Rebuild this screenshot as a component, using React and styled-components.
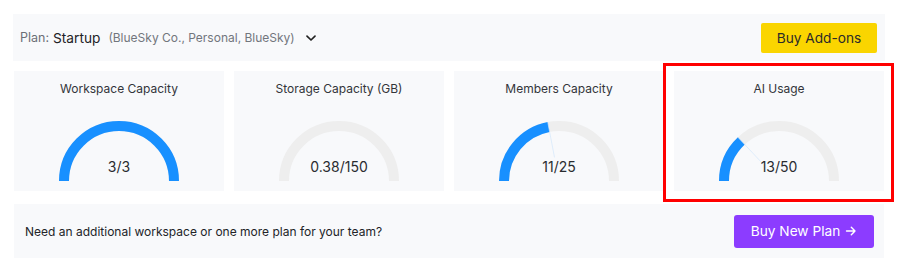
import React from "react";
import styled, { createGlobalStyle } from "styled-components";

const Global = createGlobalStyle`
  html, body { margin: 0; padding: 0; background: #ffffff; }
  body { font-family: Inter, "Noto Sans", Arial, sans-serif; -webkit-font-smoothing: antialiased; }
`;

const Page = styled.div`
  width: 870px;
  padding: 14px 0 0 14px;
  display: flex;
  flex-direction: column;
`;

const TopBar = styled.div`
  height: 47px;
  background: #f8f9fb;
  display: flex;
  align-items: center;
  justify-content: space-between;
  padding: 0 8px 0 7px;
  margin-left: -1px;
  margin-right: -1px;
`;

const PlanInfo = styled.div`
  display: flex;
  align-items: center;
  white-space: nowrap;
`;

const PlanLabel = styled.span`
  font-size: 12.5px;
  color: #6b6f76;
`;

const PlanName = styled.span`
  font-size: 13.7px;
  color: #1f2226;
  margin-left: 4px;
`;

const PlanOrgs = styled.span`
  font-size: 12px;
  color: #72767d;
  margin-left: 8px;
`;

const Chevron = styled.svg`
  margin-left: 10px;
  width: 12px;
  height: 12px;
`;

const AddonsButton = styled.button`
  width: 116px;
  height: 30px;
  border: none;
  border-radius: 2px;
  background: #fad500;
  color: #2a2a2a;
  font-family: inherit;
  font-size: 13.7px;
  padding: 0;
`;

const Cards = styled.div`
  margin-top: 10px;
  display: grid;
  grid-template-columns: repeat(4, 210px);
  column-gap: 10px;
`;

const Card = styled.div`
  position: relative;
  height: 120px;
  background: #f8f9fb;
  display: flex;
  flex-direction: column;
  align-items: center;
  box-sizing: border-box;
  padding: 9px 0 10px;
`;

const CardTitle = styled.div`
  font-size: 12px;
  line-height: 17px;
  color: #33353a;
`;

const GaugeWrap = styled.div`
  margin-top: auto;
  display: grid;
  width: 120px;
  height: 60px;
  & > * { grid-area: 1 / 1; }
`;

const GaugeValue = styled.div`
  align-self: end;
  justify-self: center;
  margin-bottom: 6px;
  font-size: 14px;
  line-height: 16px;
  color: #2a2c30;
`;

const Highlight = styled.div`
  position: absolute;
  left: -11px;
  top: -8px;
  right: -10px;
  bottom: -11px;
  border: 3px solid #f00;
  pointer-events: none;
`;

const BottomBar = styled.div`
  margin-top: 13px;
  height: 54px;
  background: #f8f9fb;
  display: flex;
  align-items: center;
  justify-content: space-between;
  padding: 0 10px 0 11px;
`;

const BottomText = styled.span`
  font-size: 12px;
  color: #222428;
`;

const PlanButton = styled.button`
  width: 140px;
  height: 33px;
  border: none;
  border-radius: 3px;
  background: #8c3cff;
  color: #ffffff;
  font-family: inherit;
  font-size: 13.7px;
  padding: 0;
  display: flex;
  align-items: center;
  justify-content: center;
  gap: 5px;
`;

function Gauge({ value, max }) {
  const ratio = Math.max(0, Math.min(1, value / max));
  const cx = 60, cy = 60, r = 55;
  const a = Math.PI * ratio;
  const ex = cx - r * Math.cos(a);
  const ey = cy - r * Math.sin(a);
  const ox = cx - 60 * Math.cos(a);
  const oy = cy - 60 * Math.sin(a);
  const ix = cx - 24 * Math.cos(a);
  const iy = cy - 24 * Math.sin(a);
  const bg = `M 5 60 A 55 55 0 0 1 115 60`;
  const showFill = ratio > 0.01;
  const fg = showFill ? `M 5 60 A 55 55 0 0 1 ${ex.toFixed(2)} ${ey.toFixed(2)}` : null;
  return (
    <GaugeWrap>
      <svg width="120" height="60" viewBox="0 0 120 60">
        <path d={bg} fill="none" stroke="#eeeeee" strokeWidth="10" />
        {fg && <path d={fg} fill="none" stroke="#1890ff" strokeWidth="10" />}
        {showFill && ratio < 1 && (
          <line x1={ox} y1={oy} x2={ix} y2={iy} stroke="#d3e7fb" strokeWidth="0.7" />
        )}
      </svg>
      <GaugeValue>{`${value}/${max}`}</GaugeValue>
    </GaugeWrap>
  );
}

const metrics = [
  { title: "Workspace Capacity", value: 3, max: 3 },
  { title: "Storage Capacity (GB)", value: 0.38, max: 150 },
  { title: "Members Capacity", value: 11, max: 25 },
  { title: "AI Usage", value: 13, max: 50, highlight: true },
];

export default function App() {
  return (
    <>
      <Global />
      <Page>
        <TopBar>
          <PlanInfo>
            <PlanLabel>Plan:</PlanLabel>
            <PlanName>Startup</PlanName>
            <PlanOrgs>(BlueSky Co., Personal, BlueSky)</PlanOrgs>
            <Chevron viewBox="0 0 12 12">
              <path d="M2 4.2 L6 8 L10 4.2" fill="none" stroke="#222" strokeWidth="1.7" strokeLinecap="round" strokeLinejoin="round" />
            </Chevron>
          </PlanInfo>
          <AddonsButton>Buy Add-ons</AddonsButton>
        </TopBar>
        <Cards>
          {metrics.map((m) => (
            <Card key={m.title}>
              <CardTitle>{m.title}</CardTitle>
              <Gauge value={m.value} max={m.max} />
              {m.highlight && <Highlight />}
            </Card>
          ))}
        </Cards>
        <BottomBar>
          <BottomText>Need an additional workspace or one more plan for your team?</BottomText>
          <PlanButton>
            Buy New Plan
            <svg width="12" height="12" viewBox="0 0 12 12">
              <path d="M1.5 6 H10 M6.3 2.2 L10 6 L6.3 9.8" fill="none" stroke="#fff" strokeWidth="1.4" strokeLinecap="round" strokeLinejoin="round" />
            </svg>
          </PlanButton>
        </BottomBar>
      </Page>
    </>
  );
}
